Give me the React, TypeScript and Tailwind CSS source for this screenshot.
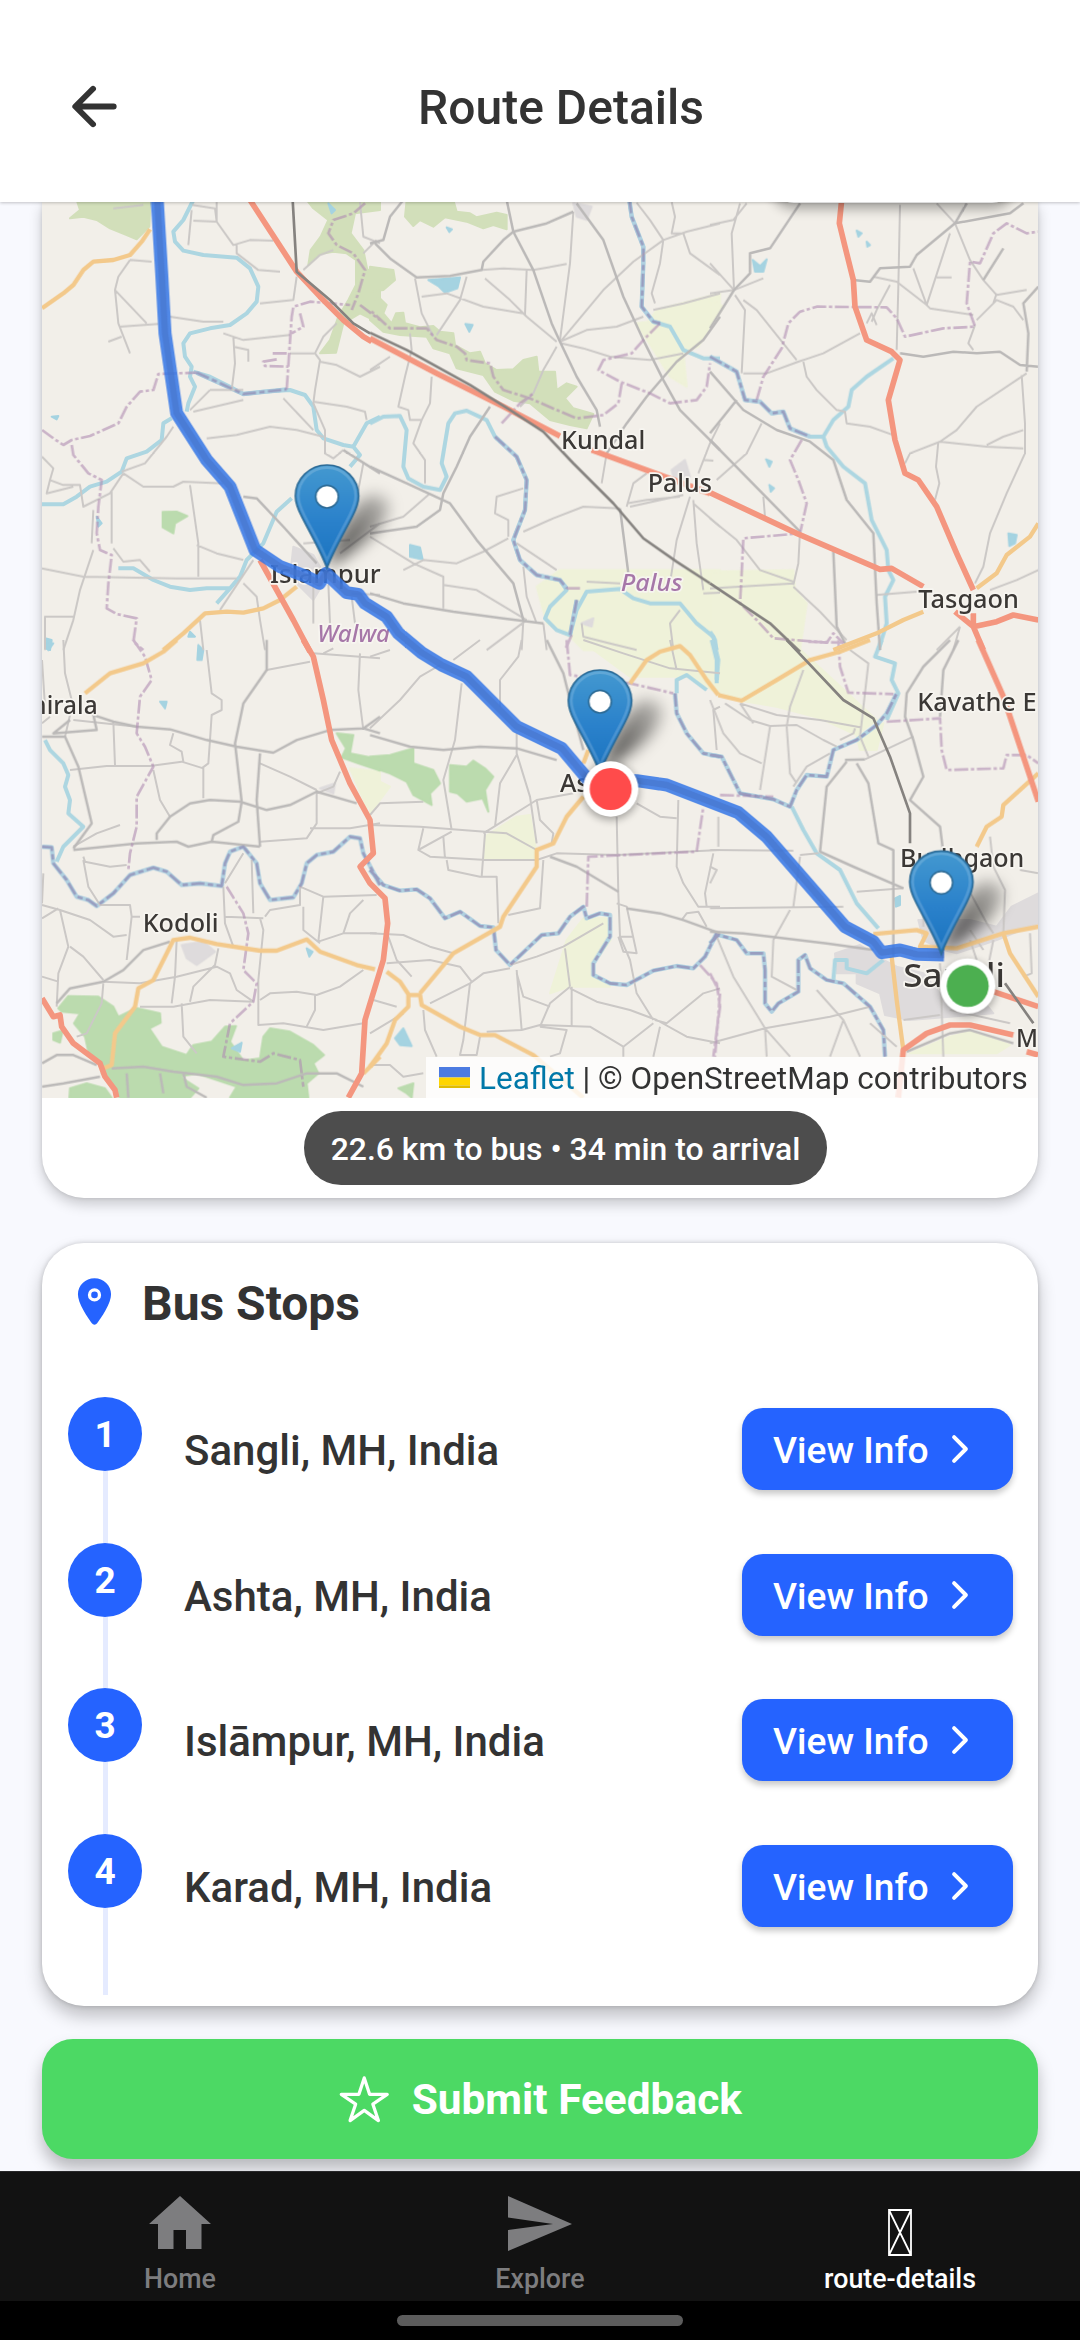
import React from "react";

type TileKey = "A" | "B" | "C" | "D" | "E" | "F";
type Layer = Partial<Record<TileKey, string>>;

const tileOrigin: Record<TileKey, [number, number]> = {
  A: [0, 0],
  B: [1020, 0],
  C: [2040, 0],
  D: [0, 1350],
  E: [1020, 1350],
  F: [2040, 1350],
};

const scrub: Layer = {
  A: "M120 85L150 60 140 30 362 30 358 110 320 148 290 135 240 115 200 90 160 80Z M830 30L1050 30 1050 60 975 70 962 130 1000 180 1012 240 1050 235 1050 400 990 370 940 400 918 488 870 490 900 450 925 380 955 330 978 285 978 210 950 190 910 185 870 192 835 225 842 180 872 140 895 90 850 55Z",
  B: "M110 30L250 30 260 65 300 70 320 82 380 68 410 75 410 118 370 105 340 115 290 95 225 82 190 110 150 90 130 108 105 80Z M0 230L70 240 75 270 40 300 0 305Z M0 330L30 325 50 345 40 370 65 400 78 370 100 368 105 400 150 412 190 408 210 425 250 430 255 465 300 490 330 485 345 520 380 540 430 538 460 510 500 500 505 545 555 545 560 600 590 580 620 590 585 625 610 655 670 672 650 715 600 705 540 690 480 640 430 632 375 605 340 555 260 535 240 490 190 475 170 440 90 435 40 425 0 390Z",
};

const wood: Layer = {
  A: "M398 966L440 965 472 978 435 1000 430 1030 398 1012Z",
  D: "M85 1105L115 1068 205 1070 250 1100 265 1130 320 1104 390 1120 392 1148 358 1165 395 1220 470 1245 490 1215 545 1205 585 1160 618 1158 600 1205 640 1262 690 1255 700 1190 720 1165 780 1175 850 1215 882 1245 850 1270 865 1300 830 1330 835 1373 600 1373 620 1340 500 1300 450 1310 505 1345 480 1373 270 1373 215 1300 225 1280 175 1235 165 1190 132 1150 150 1120 95 1115Z M120 1345L170 1330 225 1345 245 1373 118 1373Z M70 1180L98 1172 90 1208 70 1200Z M920 280L970 285 960 340 1050 358 1050 392 985 370 935 352 948 325Z",
  E: "M0 350L60 345 130 325 130 370 190 390 210 430 180 460 185 495 130 465 110 425 60 400 0 380Z M240 375L290 380 310 362 345 385 370 410 345 450 355 515 338 475 290 485 262 460 240 455Z M85 1345L130 1330 125 1373 110 1360Z",
};

const farm: Layer = {
  B: "M860 360L1050 310 1050 360 985 470 940 485 950 590 900 560 800 400 835 395Z M500 1190L570 1140 1050 1140 1050 1380 640 1380 600 1340 530 1300Z",
  C: "M0 325L40 350 0 410Z M0 1145L250 1140 255 1200 290 1240 270 1380 0 1380Z",
  D: "M960 385L1050 395 1050 450 1012 505Z",
  E: "M0 410L60 440 0 520Z M345 590L440 530 480 525 500 640 498 660 345 655Z M640 835L710 835 722 900 665 980 672 1010 720 1040 600 1040 540 1060 590 900Z M630 0L1050 0 1050 165 960 110 780 110Z",
  F: "M0 0L240 0 500 240 440 285 330 235 200 200 80 180 0 140Z M440 290L520 250 500 330 450 330Z M720 1190L780 1175 900 1215 860 1240 600 1240Z",
};

const urban: Layer = {
  A: "M790 1070L850 1095 870 1130 880 1180 850 1230 780 1160Z",
  B: "M610 40L665 50 650 90 620 80Z M905 840L945 810 960 860 915 880Z M635 1300L670 1285 665 1310Z",
  D: "M455 915L520 905 555 935 500 975 470 955Z M870 445L915 430 910 460Z",
  F: "M375 940L450 915 520 960 560 980 640 1000 690 1060 830 1095 850 1120 600 1140 525 1125 510 1060 440 1030 440 1000 380 1000Z M625 840L780 840 860 860 905 800 985 760 985 850 860 900 740 940 700 930 640 900Z",
};

const water: Layer = {
  A: "M490 30L460 90 430 125 435 155 460 182 520 195 620 203 660 235 685 290 680 335 650 370 600 405 540 415 480 430 460 460 465 500 485 530 480 560 495 590 475 640 470 665 M425 685L400 700 395 750 350 785 290 805 275 845 230 875 180 890 140 920 100 943 36 943 M490 545L540 560 600 590 640 612 700 605 780 600 825 615 850 650 860 720 880 745 940 765 970 770 1010 700 1050 680 M970 770L990 795 960 830 M785 925L740 965 700 1060 650 1110 630 1160 600 1195 530 1195 480 1200 420 1190 370 1170 310 1135 265 1135 M600 1195L560 1240",
  B: "M0 700L40 680 90 678 110 720 100 830 115 865 160 890 210 900 230 860 215 820 235 700 255 670 290 662 350 690 375 740 440 800 470 870 465 960 430 1050 450 1110 500 1155 570 1170 590 1200 540 1250 525 1285 560 1320 600 1335 620 1260 650 1205 750 1197 790 1225 840 1240 930 1240 980 1300 1030 1340 1040 1380 M778 30L785 80 820 170 820 220 815 350 850 395 900 410 940 480 1000 505 1050 505",
  C: "M0 500L80 545 105 630 150 635 185 670 220 665 240 715 300 740 340 740 350 770 400 830 465 880 485 990 530 1080 535 1140 550 1170 525 1220 530 1300 505 1380 M340 740L370 690 415 650 425 600 470 560 550 505 M0 1325L15 1350 18 1380",
  D: "M45 300L60 330 100 370 115 405 105 440 120 480 115 520 160 560 100 620 80 665",
  E: "M920 160L920 120 950 105 1010 150 M1030 0L1045 60 1040 120",
  F: "M515 0L495 50 555 70 545 120 565 160 530 240 M5 0L20 60 20 130 M245 500L280 570 320 640 390 690 440 790 505 865 M370 1020L375 960 410 960 410 985 470 1000 520 960",
};

const lakes: Layer = {
  A: "M65 680L85 678 80 688Z M480 1325L495 1340 475 1340Z M45 1345L65 1350 60 1380 45 1375Z M895 40L915 60 905 70Z M200 980L215 1000 205 1010Z",
  B: "M175 270L270 262 262 295 225 308 205 288Z M120 1065L150 1072 158 1108 120 1100Z M286 402L308 405 298 425Z M230 112L246 118 238 126Z",
  C: "M128 210L150 228 170 208 160 245 135 245Z M440 122L455 130 445 140Z M470 155L480 165 472 170Z M168 808L185 815 178 830Z M895 1030L920 1035 915 1060 898 1068Z M178 885L192 895 182 905Z",
  D: "M45 5L70 10 55 30Z M505 15L520 30 515 60 502 60Z M390 185L410 185 405 205Z M830 925L848 935 838 950Z M605 1225L635 1208 630 1235Z",
  E: "M75 1195L100 1165 125 1218 90 1215Z",
  F: "M555 775L570 768 570 795 558 800Z",
};

const minorRoads: Layer = {
  A: "M487 45L555 55 560 95 490 92 M485 60L475 165 M560 36L560 95 610 165 660 150 730 152 M620 165L620 190 685 240 750 245 M250 55L340 45 M300 210L365 215 M300 210L265 260 255 300 265 400 300 490 M235 455L275 440 M255 300L350 400 M270 410L385 402 M420 380L520 395 580 395 M580 430L640 450 780 435 M610 440L615 520 605 600 M610 470L655 480 655 515 M690 340L790 330 800 260 M820 240L870 195 910 180 M780 490L855 490 870 510 855 600 850 640 885 720 885 790 910 805 940 780 M870 515L920 525 990 560 1050 530 M850 635L950 650 1005 665 1010 690 M490 665L640 630 M540 600L480 660 M540 600L640 600 M530 745L620 735 720 710 800 720 880 740 M760 625L850 720 M1000 820L985 900 M855 490L880 440 920 400 M990 36L1000 140 1050 160 M1000 190L1040 150 M280 850L340 890 430 890 460 875 580 880 M480 885L505 1060 505 1160 M275 845L345 820 410 740 430 710 M36 800L70 835 60 870 100 885 150 885 160 950 240 910 280 850 M60 870L50 910 130 890 M245 905L245 1060 M190 960L185 1060 M190 1080L150 1200 130 1290 100 1380 M250 1075L280 1115 330 1110 360 1145 M36 1135L160 1160 440 1165 620 1165 M500 1065L560 1090 640 1110 M670 1110L570 1260 M640 1180L680 1220 690 1290 705 1380 M510 1290L520 1380 M45 1380L45 1280 130 1280 M895 1180L900 1300 M850 1180L850 1300 M965 1220L975 1300 M965 1210L1050 1215 M930 1090L1050 1000 M820 1060L960 1050",
  B: "M335 240L400 235 490 240 590 222 M345 265L420 330 470 380 560 455 M470 240L465 375 M135 265L155 370 190 440 M290 260L270 330 200 435 M155 320L230 310 340 350 460 370 M610 65L600 220 570 450 M575 450L700 300 790 215 880 150 950 125 1050 100 M570 455L650 420 740 410 820 380 M575 460L640 475 720 500 840 510 940 490 M560 470L520 540 490 610 450 650 M800 38L840 90 880 150 870 220 845 310 855 340 M905 36L915 80 905 130 940 130 960 190 1050 255 M850 360L940 340 1050 310 M0 540L60 500 M120 430L125 480 105 560 85 650 115 660 120 690 155 690 M185 560L180 640 155 690 130 760 165 810 165 880 M180 910L100 980 0 1010 M100 1140L160 1110 260 1120 340 1085 415 1045 M460 1025L550 985 640 950 750 955 M415 1040L415 990 375 970 380 920 460 895 M440 1060L560 1140 M0 1040L130 1120 220 1160 220 1255 M220 1185L320 1200 420 1260 470 1290 M460 1130L470 1220 500 1300 M470 1290L350 1380 M460 1290L455 1380 M520 1300L530 1380 M830 850L790 880 770 950 M770 940L830 930 930 920 M960 920L920 1050 900 1180 M970 930L980 1060 1000 1200 M970 940L1050 1010 M985 850L1020 760 1050 700 M710 790L695 880 M930 1260L900 1300 910 1380 M635 1300L640 1340 720 1360 800 1380 M750 1180L650 1175 M780 950L940 915 M1000 1210L1050 1208 M1000 810L1030 812",
  C: "M0 105L70 90 110 40 M90 40L65 130 72 300 M0 220L72 300 M0 310L72 300 160 265 M75 315L105 360 95 550 M100 330L140 360 260 510 M100 550L170 550 265 515 340 490 450 430 M280 515L290 560 320 600 380 660 405 665 410 700 480 710 550 735 M570 45L565 290 560 480 M720 130L650 345 610 235 M680 40L735 100 780 210 820 270 M820 270L860 315 950 300 M490 260L560 275 650 345 660 355 790 375 M680 262L725 262 M540 285L500 360 485 395 M470 400L485 370 500 405 M950 550L800 650 740 720 690 755 600 790 585 820 M935 555L945 700 945 790 890 910 840 1030 820 1130 795 1180 M690 755L830 770 940 775 M830 765L880 740 940 720 M685 755L678 830 688 880 675 930 M155 700L110 790 20 870 M270 1025L265 1120 250 1185 M0 985L80 1050 150 1140 250 1175 M250 1190L330 1265 410 1350 M0 1195L250 1180 M500 1215L620 1205 M840 1200L920 1170 985 1140 M750 1310L680 1380 M750 1310L730 1380 M160 920L165 980 M795 405L775 460 790 480 M800 390L860 330 910 350 940 390 M850 340L860 310",
  D: "M250 245L255 375 M120 390L230 378 360 378 455 365 520 385 520 475 M430 280L420 315 455 335 460 365 M530 30L545 160 575 180 575 210 545 225 540 300 535 370 515 385 M710 90L840 65 M690 370L780 410 860 450 M860 460L910 440 930 395 M860 450L860 550 830 595 690 605 M130 620L200 580 270 555 M840 565L960 565 1050 550 M160 650L165 665 240 680 290 675 M160 660L175 740 210 795 300 795 305 830 330 830 M305 830L290 960 M36 795L90 810 180 840 250 890 290 885 M90 810L115 920 85 1000 80 1100 M120 920L160 950 220 1020 M36 1010L85 1025 M36 835L85 805 M36 790L40 700 M330 1030L440 1010 560 980 600 1000 620 1050 670 1085 M220 1025L330 1030 M220 1030L215 1090 170 1180 140 1190 M330 1100L430 1100 540 1080 670 1085 M440 900L435 1010 425 1090 M480 1085L490 1040 555 975 565 925 M455 1090L460 1190 500 1240 M690 835L700 870 685 1020 685 1155 760 1150 880 1170 1000 1150 M705 830L720 810 810 795 810 740 880 770 1040 765 M880 770L865 905 940 880 1040 880 M940 880L960 820 1000 780 M820 800L820 870 870 910 M690 1080L720 1060 800 1055 860 1065 930 1040 1000 990 M855 1065L855 1110 830 1160 M580 740L585 850 610 920 M640 640L585 730 M665 660L670 820 M585 830L700 835 M370 390L390 480 420 530 M36 60L45 200 M100 0L105 100 125 180 M850 40L990 50 1050 55 M880 40L910 25 M990 40L985 150 1000 270 M36 250L60 230 M120 225L105 290 M320 260L130 240",
  E: "M0 265L90 180 150 110 210 75 M0 50L60 30 M275 130L255 300 220 420 245 570 M455 0L445 50 390 120 390 200 M250 60L330 0 M440 280L440 340 480 470 500 610 M440 345L390 430 375 560 M340 580L500 480 610 460 M0 555L150 560 345 575 410 580 500 630 M0 525L30 490 160 485 M160 565L145 630 180 650 350 660 500 660 560 640 740 645 1050 630 M145 630L245 575 M345 580L335 710 M220 590L225 655 M230 660L235 690 330 710 380 710 385 850 M520 660L510 805 415 825 M500 480L510 540 550 580 545 610 M740 530L745 760 750 890 780 960 800 1060 850 1140 M800 490L870 530 920 535 M925 480L920 680 940 730 985 800 1050 800 M740 790L770 800 800 940 760 935 745 890 M750 890L790 890 M420 975L500 950 580 920 700 850 M585 925L600 1040 M420 985L340 1000 300 1030 180 1090 M300 1030L280 1200 270 1245 320 1245 330 1190 M0 880L100 885 180 920 250 940 M55 890L80 960 125 1010 M50 970L180 960 270 980 305 1025 M440 1000L460 1070 540 1100 M600 1040L540 1090 510 1160 M600 1045L680 1085 780 1110 860 1140 950 1190 1050 1210 M605 1040L605 1160 M440 990L455 1170 M350 1175L455 1170 510 1155 660 1160 760 1220 850 1150 M510 1160L590 1170 570 1240 540 1250 M855 1140L890 1150 1000 1060 1050 1045 M870 1160L850 1250 M760 1220L760 1250 M0 1180L100 1120 M160 1110L165 1170 200 1250 M0 1275L60 1275 100 1310 160 1300 M10 1080L80 1100 M640 0L760 40 900 85 1050 100 M900 0L920 90 M935 840L950 820 985 815 1010 860 M1030 640L1005 760 1010 800 M1050 200L1030 210 1040 330",
  F: "M0 180L40 280 90 340 155 370 M45 190L120 240 180 258 260 255 340 300 380 320 M90 190L130 250 M90 190L200 225 330 240 450 262 M280 90L240 200 230 260 240 400 260 430 M180 260L150 450 M420 30L475 70 450 290 475 350 M435 265L430 280 390 300 M250 440L290 380 360 340 M465 358L610 290 M25 530L25 620 M0 630L250 632 M270 645L325 640 M270 650L250 800 M0 805L400 800 M240 810L190 900 185 1010 260 1050 M20 890L70 1010 165 1165 0 1210 M165 1165L360 1130 480 1100 M165 1165L170 1250 M165 1165L240 1250 M400 1140L360 1250 M320 1050L400 1140 450 1250 M440 755L580 745 M840 590L850 680 885 750 880 880 M760 720L830 850 850 880 M780 870L820 930 M780 900L800 960 M690 970L700 1250 M580 1140L690 1125 M480 1150L560 1220 M720 1110L900 1150 M960 880L965 1000 940 1010 M930 690L985 700 M640 780L640 860 M0 680L20 690 0 730 M700 1040L850 1060 M850 900L830 1000",
};

const roads: Layer = {
  A: "M640 920L680 925 760 1010 860 1120 M940 780L1050 850",
  B: "M100 30L60 80 40 150 0 160 M15 160L60 205 140 262 240 258 335 240 340 215 400 150 430 125 530 100 610 65 M410 30L430 125 490 240 545 400 570 455 620 560 680 660 690 710 M620 40L700 150 760 320 820 450 880 570 930 660 1050 780 M1050 380L1000 450 920 515 830 620 770 700 710 790 M360 650L300 740 260 830 220 910 210 960 140 1010 0 1030 M0 830L110 880 240 940 320 1050 430 1180 460 1290 M0 1210L100 1240 250 1265 400 1285 520 1300 M750 955L775 1150",
  C: "M72 300L120 250 120 190 180 175 270 40 M72 300L0 415 M430 270L480 275 510 235 600 230 620 195 735 100 900 70 940 40 M735 100L770 40 M820 270L880 175 M985 290L940 340 955 430 950 545 M985 530L930 525 870 485 800 490 730 485 640 500 570 490 M0 545L100 660 200 720 300 755 370 810 410 930 490 1030 500 1240 510 1380 M0 730L40 680 80 630 M0 750L270 1025 M370 1085L380 1310 410 1370",
  D: "M120 240L70 280 200 270 190 225 250 245 320 260 420 268 530 300 620 320 730 338 800 300 900 270 1000 265 1050 280 M1000 265L1050 230 M36 290L105 290 145 380 185 550 130 625 M710 0L710 90 640 190 615 310 635 485 625 545 550 585 545 605 M690 340L680 480 690 620 M980 490L860 455 780 495 710 510 630 485 540 480 480 490 420 530 380 580 380 600 M130 630L320 610 440 605 475 620 545 605 690 620 M80 1090L120 1045 220 1025 280 990 340 930 420 905 M36 1270L80 1245 130 1245 200 1275 M36 1340L100 1330 210 1310 M245 1285L340 1280 430 1295 560 1310 640 1335 740 1330 830 1300 920 1300 1000 1340 M290 1300L295 1373 M390 1300L400 1360 M460 1300L470 1340 530 1373",
  E: "M0 285L120 320 220 330 330 320 440 325 560 360 M530 0L580 100 600 180 640 330 M540 650L620 680 745 755 M770 805L870 820 940 840 1050 880",
  F: "M405 360L465 358 M440 370L475 430 505 610 550 630 550 950 M410 365L350 440 330 635 430 680 580 745 M745 0L700 90 690 230 M720 0L640 80 590 160 585 230 610 300 640 410 600 480 690 560 700 640 M0 875L100 880 350 910 490 930 M590 1235L720 1180 780 1170 910 1210",
};

const borders: Layer = {
  A: "M36 720L70 745 100 765 125 750 180 738 265 700 290 650 330 605 370 600 385 552 500 548 M770 598L785 380 790 350 840 335 960 345 M125 765L130 795 175 850 215 870 205 950 200 1030 210 1080 245 1095 235 1180 230 1255 260 1272 320 1285 310 1355 340 1380 M1005 40L970 70 910 90 895 130 920 165 970 190 1005 240 985 310 965 360 M990 345L1050 390 M810 370L820 410 785 430 M770 490L725 490 M740 508L700 515 705 528 775 530",
  B: "M870 400L820 450 785 490 700 510 685 540 750 575 840 610 900 640 980 630 1010 590 1020 520 M755 580L745 640 700 675 620 685 560 660 480 625 400 600 370 560 360 520 290 510 285 490 260 470 200 450 170 415 60 415 0 360 M395 700L450 640 490 610 M590 1195L630 1195 M605 1335L585 1380",
  C: "M140 630L160 560 215 475 235 400 270 365 320 350 530 352 560 385 585 440 700 415 795 410 770 340 780 215 810 220 850 130 890 100 950 130 985 125 M275 750L240 810 265 870 290 940 270 1030 100 1045 95 1150 90 1240 140 1290 190 1345 350 1358 370 1330 400 1360",
  D: "M310 0L345 50 365 120 330 170 320 280 345 320 370 380 320 470 320 560 300 640 295 690 M590 740L640 820 655 880 640 990 680 1030 670 1085 600 1150 580 1250 690 1265 730 1240 810 1260 820 1340",
  E: "M590 0L600 105 780 130 910 160 M650 800L655 650 980 635 1000 500 M990 975L1040 1030 1050 1100 1030 1250",
  F: "M385 0L390 80 415 158 550 162 M530 245L690 235 695 330 710 390 880 385 890 345 950 345 985 370 M30 465L190 470 M0 1000L30 1060 15 1250 M295 5L400 8",
};

const borderRivers: Layer = {
  A: "M500 548L560 575 640 612 770 598",
  B: "M778 30L785 80 820 170 820 220 815 350 850 395 870 400 M375 740L440 800 470 870 465 960 430 1050 450 1110 500 1155 570 1170 590 1195 M620 1230L600 1335",
  C: "M0 500L80 545 105 630 150 635 185 670 220 665 240 715 300 740",
  D: "M36 620L65 622 70 670 110 720 140 770 175 780 200 798 250 760 300 705 370 683 410 695 455 735 510 730 575 738 585 670 600 635 640 620 680 670 690 730 720 780 790 772 815 730 830 670 860 645 910 635 960 590 990 595 1000 640 1050 735",
  E: "M0 690L40 735 90 752 140 748 180 775 225 835 270 815 330 858 370 862 378 930 420 975 515 885 565 880 600 830 640 800 650 835 690 820 720 825 720 890 670 970 670 1005 720 1030 770 1035 850 992 920 978 970 985 1005 950 1040 880 M915 160L920 220 950 280 1000 340 1050 350",
  F: "M0 345L35 350 90 460 190 478 240 500 260 450 290 405 350 410 370 330 440 300 500 255 530 220 560 160 M0 910L25 885 80 900 110 940 160 940 165 990 165 1090 185 1115 205 1090 265 1055 265 960 285 945 300 985 350 1020 400 1030 480 1100 520 1170 525 1250",
};

const rail: Layer = {
  A: "M788 30L800 245 900 330 970 400 1020 430",
  B: "M0 428L110 480 300 585 420 660 520 725 610 820 730 940 820 1045 920 1115 1020 1180",
  C: "M0 1180L180 1300 270 1385",
  F: "M230 0L400 180 490 235 540 350 600 520 600 610 M885 1030L970 1150",
};

const secondary: Layer = {
  A: "M36 355L100 310 130 285 160 240 190 215 250 210 300 195 335 155 360 118 M400 1380L460 1330 525 1270 590 1265 640 1268 700 1255 750 1230 800 1190",
  C: "M985 1000L960 1040 890 1095 860 1150 800 1195 M640 1265L580 1290 500 1330 370 1380",
  D: "M165 160L240 100 340 70 400 35 440 0 M1035 988L980 975 870 935 830 898 740 932 690 932 560 912 480 893 430 900 410 940 370 1020 325 1045 315 1100 255 1180 245 1275 220 1285 M1050 1250L1000 1300",
  E: "M780 130L830 60 870 35 930 18 960 45 1010 120 1045 165 M655 330L640 370 M640 470L590 530 550 610 500 630 500 680 400 830 390 860 250 940 150 1060 M0 1280L50 1210 75 1140 115 1100 115 1065 150 1065 155 1095 270 1160 330 1185 375 1185 490 1245 640 1373 M50 995L90 1025 120 1070",
  F: "M480 0L390 35 300 60 200 120 95 182 25 165 M985 400L880 495 875 530 830 560 800 620 M985 860L880 880 740 925 630 920 650 880 620 870 490 882 M545 950L560 1080 580 1230 M880 880L900 940 985 1070",
};

const trunk: Layer = {
  A: "M660 30L800 245 870 320 940 390 1000 440 1025 455 M690 1110L740 1200 790 1290 840 1385",
  B: "M0 445L200 550 400 650 570 738 M665 780L1020 910",
  C: "M395 30L388 100 405 170 430 270 435 350 470 450 545 485 570 510 535 630 555 750 585 850 625 870 680 950 740 1090 790 1200 M0 908L260 1030 510 1138 545 1135 640 1190 M735 1265L790 1310 860 1295 910 1275 985 1290 M790 1270L790 1310 820 1380",
  D: "M820 0L850 50 880 180 905 300 960 430 1020 540 1030 640 990 680 1020 730 1065 775 1073 850 1060 960 1005 1140 995 1300 955 1373 M36 1075L70 1130 90 1125 95 1160 130 1210 210 1270 225 1310 255 1350 260 1373",
  F: "M805 0L880 170 930 320 985 485 M565 1373L580 1230 650 1180 720 1155 780 1155 910 1185 M850 1055L985 1100 M950 1235L985 1245",
};

const routePath =
  "M381 20L395 250 405 430 440 670 530 810 600 890 675 1080 750 1130 830 1160 868 1180 888 1150 950 1208 985 1213 1005 1240 1070 1280 1105 1330 1175 1388 1235 1425 1310 1460 1460 1610 1595 1675 1675 1770 1745 1770 1820 1772 1910 1785 2125 1868 2210 1940 2445 2210 2530 2255 2555 2288 2610 2280 2660 2293 2742 2295";

interface Label {
  tile: TileKey;
  x: number;
  y: number;
  w: number;
  text: string;
  size?: number;
  region?: boolean;
}

const labels: Label[] = [
  { tile: "A", x: 720, y: 1178, w: 332, text: "Islampur" },
  { tile: "A", x: 862, y: 1355, w: 218, text: "Walwa", region: true },
  { tile: "B", x: 573, y: 777, w: 253, text: "Kundal" },
  { tile: "B", x: 833, y: 905, w: 193, text: "Palus" },
  { tile: "B", x: 752, y: 1203, w: 185, text: "Palus", region: true },
  { tile: "C", x: 625, y: 1253, w: 302, text: "Tasgaon" },
  { tile: "D", x: 4, y: 222, w: 199, text: "hirala" },
  { tile: "D", x: 338, y: 877, w: 228, text: "Kodoli" },
  { tile: "E", x: 570, y: 455, w: 205, text: "Ashta" },
  { tile: "F", x: 622, y: 212, w: 358, text: "Kavathe E" },
  { tile: "F", x: 570, y: 680, w: 373, text: "Budhgaon" },
  { tile: "F", x: 580, y: 1040, w: 305, text: "Sangli", size: 98 },
  { tile: "F", x: 918, y: 1220, w: 66, text: "M" },
];

function Strokes({
  layer,
  color,
  width,
  dash,
  opacity,
}: {
  layer: Layer;
  color: string;
  width: number;
  dash?: string;
  opacity?: number;
}) {
  return (
    <g fill="none" stroke={color} strokeWidth={width} strokeDasharray={dash} opacity={opacity} strokeLinejoin="round">
      {(Object.keys(layer) as TileKey[]).map((k) => (
        <path key={k} d={layer[k]} transform={`translate(${tileOrigin[k][0]} ${tileOrigin[k][1]})`} />
      ))}
    </g>
  );
}

function Areas({ layer, color }: { layer: Layer; color: string }) {
  return (
    <g fill={color} stroke={color} strokeWidth={6} strokeLinejoin="round">
      {(Object.keys(layer) as TileKey[]).map((k) => (
        <path key={k} d={layer[k]} transform={`translate(${tileOrigin[k][0]} ${tileOrigin[k][1]})`} />
      ))}
    </g>
  );
}

function Marker({ x, y }: { x: number; y: number }) {
  return (
    <g transform={`translate(${x} ${y})`}>
      <path d="M0 308C30 220 70 130 120 95C190 80 210 130 150 200C100 250 50 280 0 308Z" fill="url(#shadowFade)" filter="url(#markerShadow)" />
      <path
        d="M0 312C-18 262 -52 205 -76 157C-89 132 -95 115 -95 95A95 93 0 0 1 95 95C95 115 89 132 76 157C52 205 18 262 0 312Z"
        fill="url(#markerFill)"
        stroke="#2e6c97"
        strokeWidth={5}
      />
      <path
        d="M0 288C-18 245 -47 194 -68 153C-80 129 -86 114 -86 95A86 85 0 0 1 86 95C86 114 80 129 68 153C47 194 18 245 0 288Z"
        fill="none"
        stroke="#fff"
        strokeOpacity={0.16}
        strokeWidth={8}
      />
      <circle cx={0} cy={97} r={34} fill="#fff" stroke="#2e6c97" strokeWidth={5} />
    </g>
  );
}

function Dot({ x, y, color }: { x: number; y: number; color: string }) {
  return (
    <g>
      <circle cx={x} cy={y + 8} r={84} fill="#000" opacity={0.35} filter="url(#dotShadow)" />
      <circle cx={x} cy={y} r={83} fill="#fff" />
      <circle cx={x} cy={y} r={63} fill={color} />
    </g>
  );
}

function RouteMap() {
  return (
    <svg viewBox="36 36 2988 2688" className="block h-[896px] w-[996px]" preserveAspectRatio="none">
      <defs>
        <linearGradient id="markerFill" x1="0" y1="0" x2="0" y2="1">
          <stop offset="0" stopColor="#4499d0" />
          <stop offset="0.55" stopColor="#2a81cb" />
          <stop offset="1" stopColor="#1a73bf" />
        </linearGradient>
        <linearGradient id="shadowFade" x1="0" y1="1" x2="1" y2="0">
          <stop offset="0" stopColor="#000" stopOpacity={0.75} />
          <stop offset="0.5" stopColor="#000" stopOpacity={0.5} />
          <stop offset="1" stopColor="#000" stopOpacity={0.2} />
        </linearGradient>
        <filter id="markerShadow" x="-60%" y="-60%" width="220%" height="220%">
          <feGaussianBlur stdDeviation="22" />
        </filter>
        <filter id="dotShadow" x="-50%" y="-50%" width="200%" height="200%">
          <feGaussianBlur stdDeviation="12" />
        </filter>
        <filter id="tileSoft" x="0" y="0" width="100%" height="100%">
          <feGaussianBlur stdDeviation="2" />
        </filter>
      </defs>
      <rect x={36} y={36} width={2988} height={2688} fill="#f2efe9" />
      <g filter="url(#tileSoft)">
        <Areas layer={farm} color="#eff2d9" />
        <Areas layer={scrub} color="#d2dfba" />
        <Areas layer={wood} color="#bbdbae" />
        <Areas layer={urban} color="#dedbdc" />
        <Areas layer={lakes} color="#a5d3e1" />
        <Strokes layer={water} color="#add6e1" width={12} />
        <Strokes layer={borderRivers} color="#afd0e0" width={13} />
        <Strokes layer={minorRoads} color="#cbc8c6" width={6} />
        <Strokes layer={roads} color="#bbb9b8" width={7.5} />
        <Strokes layer={borders} color="#b08cb2" width={8} dash="42 8 10 8" opacity={0.6} />
        <Strokes layer={borderRivers} color="#8f88b2" width={8} dash="40 10 16 10" opacity={0.7} />
        <Strokes layer={secondary} color="#f3c98b" width={13} />
        <Strokes layer={trunk} color="#f4967f" width={17} />
        <Strokes layer={rail} color="#85827f" width={8} />
        <g fontFamily='"Noto Sans", sans-serif' strokeLinejoin="round" paintOrder="stroke">
          {labels.map((l) => (
            <text
              key={l.tile + l.x}
              x={tileOrigin[l.tile][0] + l.x}
              y={tileOrigin[l.tile][1] + l.y}
              textLength={l.w}
              lengthAdjust="spacingAndGlyphs"
              fontSize={l.size ?? (l.region ? 72 : 77)}
              fontStyle={l.region ? "italic" : "normal"}
              fontWeight={500}
              fill={l.region ? "#a677a8" : "#3a3735"}
              stroke="#f7f5f0"
              strokeWidth={10}
            >
              {l.text}
            </text>
          ))}
        </g>
      </g>
      <path d={routePath} fill="none" stroke="#3475e6" strokeOpacity={0.85} strokeWidth={39} strokeLinejoin="round" />
      <path d={routePath} fill="none" stroke="#4775cc" strokeOpacity={0.65} strokeWidth={19} strokeLinejoin="round" />
      <Marker x={891} y={823} />
      <Marker x={1710} y={1438} />
      <Marker x={2734} y={1981} />
      <Dot x={1742} y={1797} color="#ff4b4b" />
      <Dot x={2813} y={2388} color="#4caf50" />
    </svg>
  );
}

const stops = ["Sangli, MH, India", "Ashta, MH, India", "Islāmpur, MH, India", "Karad, MH, India"];

function StopRow({ index, name, last }: { index: number; name: string; last: boolean }) {
  return (
    <li className={`flex ${last ? "h-[161px]" : "h-[145.7px]"}`}>
      <div className="flex w-[74px] flex-col items-center">
        <div className="flex h-[74px] w-[74px] shrink-0 items-center justify-center rounded-full bg-[#2563ff] pt-[1px] text-[37px] font-bold leading-none text-white">
          {index}
        </div>
        <div className="w-[5px] flex-1 bg-[#e5ebff]" />
      </div>
      <div className="ml-[42px] mt-[11px] flex h-[82px] flex-1 items-center justify-between">
        <span className="pt-[4px] text-[42px] font-medium leading-none text-[#333333]">{name}</span>
        <button className="flex h-[82px] w-[271px] items-center justify-between rounded-[21px] bg-[#2563ff] pl-[31px] pr-[32px] text-[37.2px] font-medium leading-none text-white shadow-[0_4px_6px_rgba(0,0,0,0.22)]">
          <span className="whitespace-nowrap pt-[3px]">View Info</span>
          <svg viewBox="0 0 512 512" className="h-[42px] w-[42px]">
            <path d="M184 112l144 144-144 144" fill="none" stroke="currentColor" strokeWidth={48} strokeLinecap="round" strokeLinejoin="round" />
          </svg>
        </button>
      </div>
    </li>
  );
}

export default function App() {
  return (
    <div className="flex h-[2340px] w-[1080px] flex-col overflow-hidden bg-[#f8f9fe] font-['Roboto',sans-serif]">
      <header className="relative z-10 flex h-[202px] shrink-0 items-center bg-white pl-[63px] pr-[84px] pt-[11px] shadow-[0_1px_3px_rgba(0,0,0,0.22)]">
        <svg viewBox="0 0 512 512" className="h-[63px] w-[63px] text-[#333333]">
          <path d="M244 400L100 256l144-144M120 256h292" fill="none" stroke="currentColor" strokeWidth={48} strokeLinecap="round" strokeLinejoin="round" />
        </svg>
        <h1 className="flex-1 pt-[3px] text-center text-[48px] font-medium leading-none text-[#333333]">Route Details</h1>
      </header>

      <main className="flex flex-1 flex-col px-[42px]">
        <section className="relative h-[996px] shrink-0 rounded-b-[42px] bg-white shadow-[0_6px_14px_rgba(0,0,0,0.2),0_0_4px_rgba(0,0,0,0.12)]">
          <RouteMap />
          <div className="absolute -top-[60px] right-[22px] h-[61px] w-[246px] rounded-[24px] bg-white shadow-[0_6px_12px_rgba(0,0,0,0.32)]" />
          <div className="absolute right-0 top-[855px] flex h-[41px] w-[612px] items-center bg-white/80 pl-[13px] text-[31.5px] leading-none text-[#333333]">
            <svg viewBox="0 0 12 8" className="mr-[9px] h-[21px] w-[31px]" preserveAspectRatio="none">
              <path fill="#4C7BE1" d="M0 0h12v4H0z" />
              <path fill="#FFD500" d="M0 4h12v3H0z" />
              <path fill="#E0BC00" d="M0 7h12v1H0z" />
            </svg>
            <span className="whitespace-nowrap pt-[2px]">
              <span className="text-[#0078a8]">Leaflet</span> | © OpenStreetMap contributors
            </span>
          </div>
          <div className="flex h-[100px] items-center justify-center pl-[51px]">
            <div className="flex h-[74px] w-[523px] items-center justify-center whitespace-nowrap rounded-[37px] bg-[#4d4d4d] pt-[3px] text-[31.9px] font-medium leading-none text-white">
              22.6 km to bus • 34 min to arrival
            </div>
          </div>
        </section>

        <section className="mt-[45px] h-[763px] shrink-0 rounded-[42px] bg-white pl-[26px] pr-[25px] pt-[32px] shadow-[0_10px_18px_rgba(0,0,0,0.24),0_0_5px_rgba(0,0,0,0.18)]">
          <div className="flex h-[53px] items-center">
            <svg viewBox="0 0 512 512" className="h-[53px] w-[53px]" fill="#2563ff">
              <circle cx={256} cy={192} r={32} />
              <path d="M256 32c-88.22 0-160 68.65-160 153 0 40.17 18.31 93.59 54.42 158.78 29 52.34 62.55 99.67 80 123.22a31.75 31.75 0 0051.22 0c17.42-23.55 51-70.88 80-123.22C397.69 278.61 416 225.19 416 185c0-84.35-71.78-153-160-153zm0 224a64 64 0 1164-64 64.07 64.07 0 01-64 64z" />
            </svg>
            <h2 className="ml-[21px] pt-[5px] text-[48px] font-bold leading-none text-[#333333]">Bus Stops</h2>
          </div>
          <ul className="mt-[69px]">
            {stops.map((s, i) => (
              <StopRow key={s} index={i + 1} name={s} last={i === stops.length - 1} />
            ))}
          </ul>
        </section>

        <button className="mt-[33px] flex h-[120px] shrink-0 items-center justify-center gap-[21px] rounded-[31px] bg-[#4cd964] text-[42.4px] font-bold leading-none text-white shadow-[0_10px_16px_rgba(0,0,0,0.26)]">
          <svg viewBox="0 0 512 512" className="h-[52.5px] w-[52.5px]">
            <path d="M480 208H308L256 48l-52 160H32l140 96-54 160 138-100 138 100-54-160z" fill="none" stroke="currentColor" strokeWidth={32} strokeLinejoin="round" />
          </svg>
          <span className="pt-[3px]">Submit Feedback</span>
        </button>
      </main>

      <nav className="relative z-10 grid h-[130px] shrink-0 grid-cols-3 border-t border-[#272729] bg-[#121212] text-[26.8px] font-medium leading-none text-[#7d7d7f]">
        <div className="flex flex-col items-center pt-[24px]">
          <svg viewBox="0 0 62 53" className="h-[53px] w-[62px]" fill="#7d7d7f">
            <path d="M24.5 53V34H37v19h15.5V28H62L31 0 0 28h9v25z" />
          </svg>
          <span className="mt-[17px]">Home</span>
        </div>
        <div className="flex flex-col items-center pt-[24px]">
          <svg viewBox="0 0 64 55" className="h-[55px] w-[64px]" fill="#7d7d7f">
            <path d="M0 0 64 28 0 55V34L45 28 0 21.5Z" />
          </svg>
          <span className="mt-[15px]">Explore</span>
        </div>
        <div className="flex flex-col items-center pt-[37px] text-white">
          <svg viewBox="0 0 24 47" className="h-[47px] w-[24px]" fill="none" stroke="currentColor" strokeWidth={1.8}>
            <path d="M1 1H23V46H1ZM1 1L23 46M23 1L1 46" />
          </svg>
          <span className="mt-[10px]">route-details</span>
        </div>
      </nav>
      <div className="flex h-[39px] shrink-0 justify-center bg-black pt-[14px]">
        <div className="h-[11px] w-[286px] rounded-full bg-[#5c5c5c]" />
      </div>
    </div>
  );
}
